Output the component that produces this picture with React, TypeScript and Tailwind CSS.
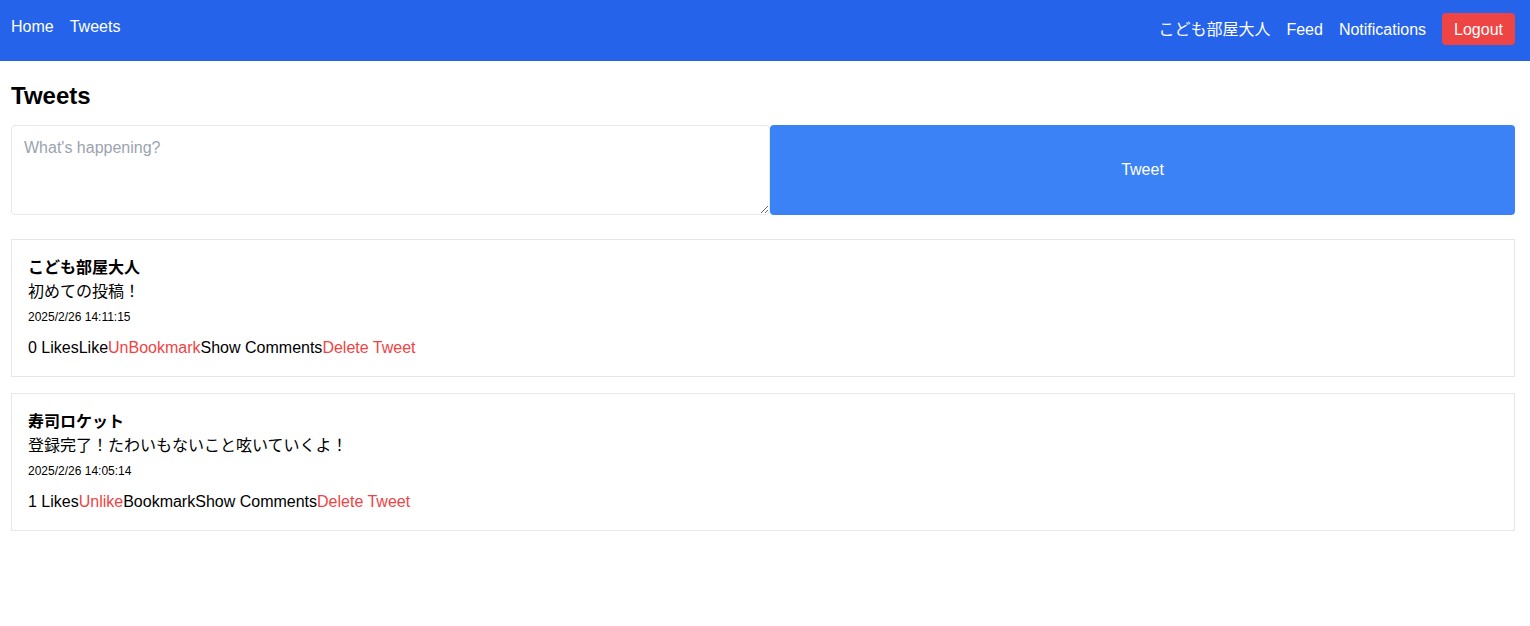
import React from "react";

const font = { fontFamily: '"Liberation Sans", "Noto Sans CJK JP", sans-serif' };

type Tweet = {
  name: string;
  body: string;
  date: string;
  likes: number;
  liked: boolean;
  bookmarked: boolean;
};

const tweets: Tweet[] = [
  { name: "こども部屋大人", body: "初めての投稿！", date: "2025/2/26 14:11:15", likes: 0, liked: false, bookmarked: true },
  { name: "寿司ロケット", body: "登録完了！たわいもないこと呟いていくよ！", date: "2025/2/26 14:05:14", likes: 1, liked: true, bookmarked: false },
];

export default function App() {
  return (
    <div className="min-h-screen bg-white text-black" style={font}>
      <header className="flex h-[61px] justify-between bg-[#2563eb] pl-[11px] pr-[15px] pt-[13px] text-white">
        <nav className="flex h-[26px] items-center gap-4 pt-[2px] text-base">
          <a>Home</a>
          <a>Tweets</a>
        </nav>
        <nav className="flex h-8 items-center gap-4 text-base">
          <span className="pt-[2px]">こども部屋大人</span>
          <a className="pt-[2px]">Feed</a>
          <a className="pt-[2px]">Notifications</a>
          <button className="h-8 rounded bg-[#ef4444] px-3 pt-[1px] text-white">Logout</button>
        </nav>
      </header>
      <main className="px-[11px] pr-[15px] pt-[19px]">
        <h1 className="mb-[13px] h-[32px] text-2xl font-bold leading-8">Tweets</h1>
        <div className="mb-6 flex h-[90px]">
          <textarea
            className="h-full w-[759px] rounded border border-[#e5e7eb] px-3 pb-3 pt-[10px] text-base placeholder:text-[#9ca3af] outline-none"
            placeholder="What's happening?"
          />
          <button className="flex-1 rounded bg-[#3b82f6] text-white">Tweet</button>
        </div>
        <div className="flex flex-col gap-4">
          {tweets.map((t) => (
            <div key={t.date} className="border border-[#e5e7eb] p-4">
              <div className="text-base font-bold leading-6">{t.name}</div>
              <div className="text-base leading-6">{t.body}</div>
              <div className="mt-[5px] text-xs leading-4">{t.date}</div>
              <div className="mt-[11px] flex text-base leading-6">
                <span>{t.likes} Likes</span>
                <button className={t.liked ? "text-[#ef4444]" : ""}>{t.liked ? "Unlike" : "Like"}</button>
                <button className={t.bookmarked ? "text-[#ef4444]" : ""}>{t.bookmarked ? "UnBookmark" : "Bookmark"}</button>
                <button>Show Comments</button>
                <button className="text-[#ef4444]">Delete Tweet</button>
              </div>
            </div>
          ))}
        </div>
      </main>
    </div>
  );
}
